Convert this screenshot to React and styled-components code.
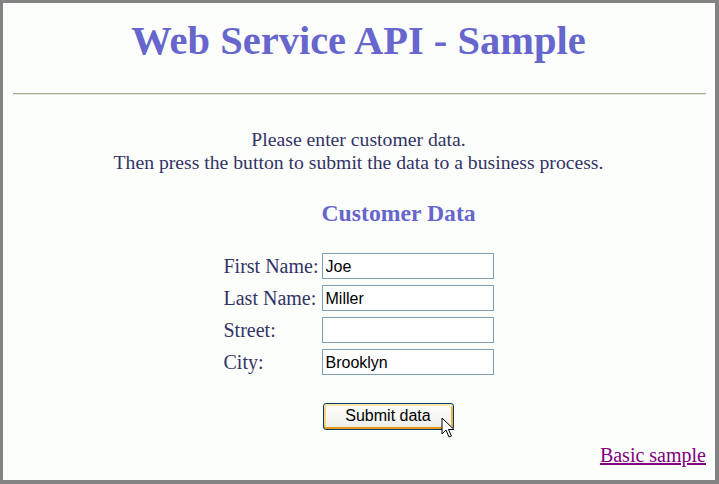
import React from "react";
import styled, { createGlobalStyle } from "styled-components";

const Global = createGlobalStyle`
  html, body { margin: 0; padding: 0; background: #fcfefc; }
  * { box-sizing: border-box; }
`;

const Frame = styled.div`
  position: relative;
  width: 719px;
  height: 484px;
  border-style: solid;
  border-color: #838383;
  border-width: 3px 4px 4px 3px;
  background: #fcfefc;
  padding: 0 9px 0 8px;
  display: flex;
  flex-direction: column;
  font-family: "Liberation Serif", "Times New Roman", serif;
  color: #333366;
`;

const Title = styled.h1`
  margin: 15px 0 0;
  font-size: 40.5px;
  line-height: 46px;
  font-weight: bold;
  text-align: center;
  color: #6666cc;
`;

const Rule = styled.hr`
  height: 0;
  margin: 29px 0 0 2px;
  border: none;
  border-top: 1px solid #a6ad96;
  border-bottom: 1px solid #e2e6d8;
`;

const Intro = styled.p`
  margin: 33px 0 0;
  font-size: 19.7px;
  line-height: 23px;
  text-align: center;
`;

const FormGrid = styled.div`
  margin: 25px auto 0;
  display: grid;
  grid-template-columns: auto 172px;
  column-gap: 3px;
  row-gap: 6px;
  align-items: center;
`;

const Heading = styled.h3`
  grid-column: 2;
  margin: 0 0 20px;
  font-size: 23.7px;
  line-height: 28px;
  font-weight: bold;
  color: #6666cc;
  white-space: nowrap;
`;

const Label = styled.label`
  grid-column: 1;
  font-size: 20px;
  line-height: 23px;
  white-space: nowrap;
`;

const Field = styled.input`
  grid-column: 2;
  width: 172px;
  height: 26px;
  margin: 0;
  padding: 1px 3px 0;
  border: 1px solid #7f9db9;
  background: #ffffff;
  font-family: "Liberation Sans", Arial, sans-serif;
  font-size: 16px;
  color: #000;
  outline: none;
`;

const ButtonCell = styled.div`
  grid-column: 2;
  position: relative;
  margin-top: 22px;
  padding-left: 1px;
`;

const Button = styled.button`
  width: 131px;
  height: 27px;
  margin: 0;
  padding: 0 0 1px;
  border: 1px solid #003c74;
  border-radius: 3px;
  background: linear-gradient(#fefefd, #f1f1ec 85%, #e6e5dd);
  box-shadow: inset 0 2px 0 #ffe9a8, inset 0 -2px 0 #e69a17,
    inset 2px 0 0 #fbd37a, inset -2px 0 0 #f3b13a;
  font-family: "Liberation Sans", Arial, sans-serif;
  font-size: 16px;
  color: #000;
  cursor: default;
`;

const Cursor = styled.svg`
  position: absolute;
  left: 119px;
  top: 14px;
  width: 14px;
  height: 22px;
  pointer-events: none;
`;

const LinkRow = styled.div`
  margin-top: 14px;
  text-align: right;
  font-size: 20px;
  line-height: 23px;
`;

const Link = styled.a`
  color: #800080;
  text-decoration: underline;
`;

export default function App() {
  return (
    <>
      <Global />
      <Frame>
        <Title>Web Service API - Sample</Title>
        <Rule />
        <Intro>
          Please enter customer data.
          <br />
          Then press the button to submit the data to a business process.
        </Intro>
        <FormGrid>
          <Heading>Customer Data</Heading>
          <Label>First Name:</Label>
          <Field defaultValue="Joe" />
          <Label>Last Name:</Label>
          <Field defaultValue="Miller" />
          <Label>Street:</Label>
          <Field defaultValue="" />
          <Label>City:</Label>
          <Field defaultValue="Brooklyn" />
          <ButtonCell>
            <Button type="button">Submit data</Button>
            <Cursor viewBox="0 0 14 22">
              <path
                d="M1 1 L1 17 L5 13 L8 20 L10.5 19 L7.5 12.5 L13 12.5 Z"
                fill="#fff"
                stroke="#000"
                strokeWidth="1"
                strokeLinejoin="miter"
              />
            </Cursor>
          </ButtonCell>
        </FormGrid>
        <LinkRow>
          <Link href="#">Basic sample</Link>
        </LinkRow>
      </Frame>
    </>
  );
}
